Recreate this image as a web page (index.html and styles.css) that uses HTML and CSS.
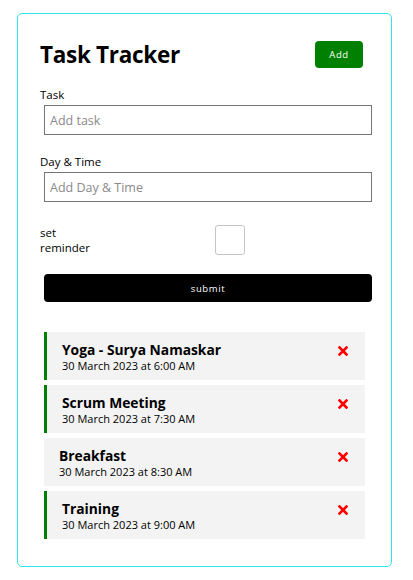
FILE: index.html
```html
<!DOCTYPE html>
<html lang="en-us">
  <head>
    <meta charset="utf-8">
    <title>Task Tracker</title>
    <link rel="stylesheet" href="styles.css">
  </head>

  <body>
    <div class="container">
      <header class="header">
        <h1>Task Tracker</h1>
        <button class="btn btnAdd">Add</button>
      </header>

      <form class="addForm">
        <div class="formControl">
          <label for="task">Task</label>
          <input type="text" id="task" placeholder="Add task">
        </div>
        <div class="formControl">
          <label for="day">Day &amp; Time</label>
          <input type="text" id="day" placeholder="Add Day &amp; Time">
        </div>
        <div class="formControl formCheck">
          <label for="reminder">set reminder</label>
          <input type="checkbox" id="reminder">
        </div>
        <input type="submit" value="submit" class="btn btnBlock">
      </form>

      <div class="tasks">
        <div class="task reminder">
          <h3>Yoga - Surya Namaskar <span class="del"><svg width="10" height="10" viewBox="0 0 10 10"><path d="M1.5 1.5 L8.5 8.5 M8.5 1.5 L1.5 8.5" stroke="#ff0000" stroke-width="2.6" stroke-linecap="square"/></svg></span></h3>
          <p>30 March 2023 at 6:00 AM</p>
        </div>
        <div class="task reminder">
          <h3>Scrum Meeting <span class="del"><svg width="10" height="10" viewBox="0 0 10 10"><path d="M1.5 1.5 L8.5 8.5 M8.5 1.5 L1.5 8.5" stroke="#ff0000" stroke-width="2.6" stroke-linecap="square"/></svg></span></h3>
          <p>30 March 2023 at 7:30 AM</p>
        </div>
        <div class="task">
          <h3>Breakfast <span class="del"><svg width="10" height="10" viewBox="0 0 10 10"><path d="M1.5 1.5 L8.5 8.5 M8.5 1.5 L1.5 8.5" stroke="#ff0000" stroke-width="2.6" stroke-linecap="square"/></svg></span></h3>
          <p>30 March 2023 at 8:30 AM</p>
        </div>
        <div class="task reminder">
          <h3>Training <span class="del"><svg width="10" height="10" viewBox="0 0 10 10"><path d="M1.5 1.5 L8.5 8.5 M8.5 1.5 L1.5 8.5" stroke="#ff0000" stroke-width="2.6" stroke-linecap="square"/></svg></span></h3>
          <p>30 March 2023 at 9:00 AM</p>
        </div>
      </div>
    </div>
  </body>
</html>
```

FILE: styles.css
```css
* {
  box-sizing: border-box;
}

body {
  margin: 0;
  font-family: "Open Sans", "Noto Sans", sans-serif;
  color: #000;
  background: #fff;
}

.container {
  width: 375px;
  height: 554px;
  margin: 13px 0 0 17px;
  padding: 26px 18px 0 22px;
  border: 1px solid #2ee8ee;
  border-radius: 5px;
}

.header {
  display: flex;
  justify-content: space-between;
  align-items: center;
  height: 28px;
  margin-right: 10px;
}

.header h1 {
  margin: 0;
  font-size: 22.5px;
  font-weight: 700;
  letter-spacing: -0.3px;
}

.btn {
  display: block;
  border: none;
  border-radius: 4px;
  color: #fff;
  font-family: "Open Sans", sans-serif;
  font-size: 9.5px;
  letter-spacing: 0.6px;
  cursor: pointer;
}

.btnAdd {
  width: 48px;
  height: 27px;
  background: #008000;
}

.addForm {
  margin-top: 19px;
}

.formControl {
  margin-bottom: 19px;
}

.formControl label {
  display: block;
  font-size: 11.5px;
  line-height: 16px;
  margin-bottom: 2px;
}

.formControl input[type="text"] {
  display: block;
  width: 328px;
  height: 30px;
  margin-left: 4px;
  padding: 0 5px;
  border: 1px solid #767676;
  font-family: "Open Sans", sans-serif;
  font-size: 12.5px;
  outline: none;
}

.formControl input::placeholder {
  color: #8a8a8a;
}

.formCheck {
  display: flex;
  align-items: center;
  margin-top: 23px;
}

.formCheck label {
  width: 60px;
  line-height: 15px;
  margin: 0;
}

.formCheck input {
  appearance: none;
  width: 30px;
  height: 30px;
  margin: 0 0 0 115px;
  border: 1px solid #c4c4c4;
  border-radius: 3px;
  background: #fff;
}

.btnBlock {
  width: 328px;
  height: 28px;
  margin-left: 4px;
  background: #000;
}

.tasks {
  margin-top: 30px;
  margin-left: 4px;
  margin-right: 8px;
}

.task {
  height: 48px;
  margin-bottom: 5px;
  padding: 9px 17px 0 15px;
  background: #f3f3f3;
}

.task.reminder {
  border-left: 3px solid #008000;
}

.task h3 {
  display: flex;
  justify-content: space-between;
  align-items: center;
  margin: 0;
  font-size: 13.8px;
  line-height: 17px;
  font-weight: 700;
}

.task .del {
  display: flex;
  margin-top: 2px;
}

.task p {
  margin: 0;
  font-size: 11px;
  line-height: 15px;
}
```
